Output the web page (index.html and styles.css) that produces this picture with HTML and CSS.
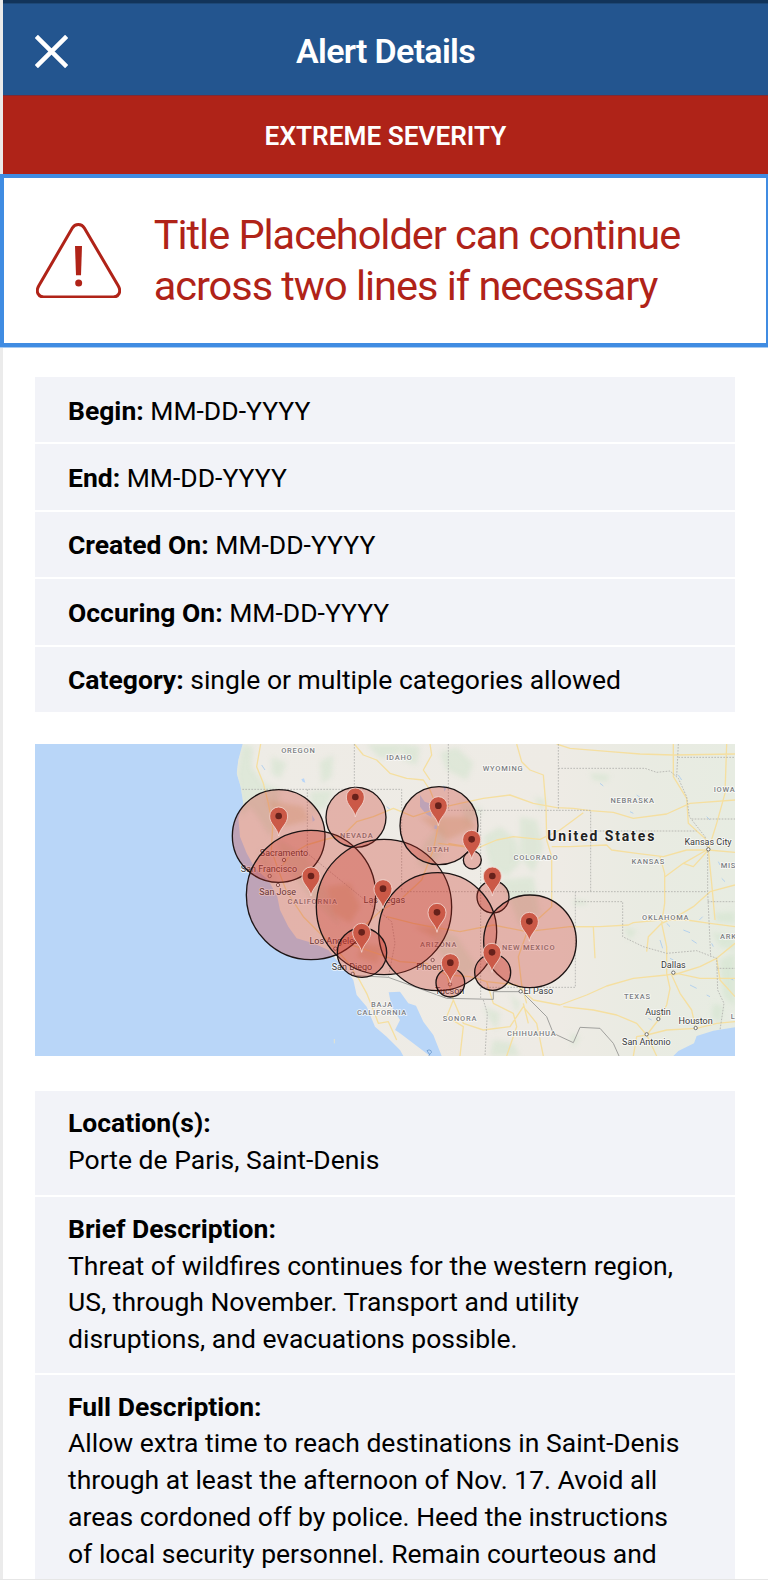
FILE: index.html
```html
<!DOCTYPE html>
<html lang="en">
<head>
<meta charset="utf-8">
<title>Alert Details</title>
<link rel="stylesheet" href="styles.css">
</head>
<body>
<div class="screen">
  <div class="status-strip"></div>
  <header class="header">
    <svg class="close" viewBox="0 0 32 32" aria-label="Close"><path d="M1.3 1.3 30.7 30.7M30.7 1.3 1.3 30.7"/></svg>
    <h1 class="header-title">Alert Details</h1>
  </header>
  <div class="severity"><span>EXTREME SEVERITY</span></div>
  <section class="title-box">
    <svg class="warning" viewBox="0 0 255 227">
      <path class="warning-outline" d="M109 15C117 1 137 1 145 15L247 189C257 207 247 222 232 222H23C8 222-2 207 8 189Z"/>
      <path class="warning-mark" d="M117 69H138L135 157H120Z"/>
      <circle class="warning-mark" cx="128" cy="180" r="10.5"/>
    </svg>
    <h2 class="title">Title Placeholder can continue<br>across two lines if necessary</h2>
  </section>
  <main class="content">
    <div class="facts">
      <p class="fact"><span><b>Begin:</b> MM-DD-YYYY</span></p>
      <p class="fact"><span><b>End:</b> MM-DD-YYYY</span></p>
      <p class="fact"><span><b>Created On:</b> MM-DD-YYYY</span></p>
      <p class="fact"><span><b>Occuring On:</b> MM-DD-YYYY</span></p>
      <p class="fact"><span><b>Category:</b> single or multiple categories allowed</span></p>
    </div>
    <svg class="map" viewBox="-495 12 2100 936" preserveAspectRatio="none">
      <defs>
        <linearGradient id="land" x1="0" x2="1"><stop offset="0" stop-color="#eeece6"/><stop offset=".65" stop-color="#eeebe5"/><stop offset=".82" stop-color="#e9ebe2"/><stop offset="1" stop-color="#e7ece2"/></linearGradient>
        <filter id="soft" x="-20%" y="-20%" width="140%" height="140%"><feGaussianBlur stdDeviation="8"/></filter>
        <clipPath id="coast"><path d="M128 12 115 60 110 100 122 140 130 190 115 235 120 290 140 340 165 385 205 420 232 470 240 510 265 560 290 595 340 610 385 630 410 660 440 690 460 720 470 765 500 800 525 860 560 890 600 930 610 948H1605V12Z"/></clipPath>
        <g id="pin"><path d="M0 60C-4 34-27 25-27 0A27 27 0 1 1 27 0C27 25 4 34 0 60Z"/><circle r="10"/></g>
      </defs>
      <rect class="water" x="-495" y="12" width="2100" height="936"/>
      <g clip-path="url(#coast)">
        <rect x="100" y="12" width="1505" height="936" fill="url(#land)"/>
        <g class="forest" filter="url(#soft)">
          <path d="M125 12 160 20 155 80 190 130 240 150 235 240 210 290 180 240 150 200 125 230 110 100Z"/>
          <path d="M215 50 260 70 240 115 215 100ZM360 65 400 45 395 110 365 130ZM330 155 400 150 380 200 335 220ZM500 12H600V40L540 55ZM235 300 320 350 390 470 420 560 340 480 250 370ZM175 330 205 350 230 440 190 390Z"/>
          <path d="M600 12 660 20 650 75 610 60ZM720 40 770 22 820 70 800 120 740 90ZM680 300 730 250 740 310 690 390 650 370ZM780 180 850 210 800 260ZM850 290 900 260 950 300 960 370 920 410 870 380ZM960 230 1010 240 1030 320 1000 400 960 350ZM900 420 1000 410 1020 520 960 560 930 480ZM690 560 770 590 830 680 790 710 720 640ZM870 600 900 620 890 700 860 680Z"/>
          <path d="M850 800 900 820 890 870 870 840ZM930 760 960 790 950 820ZM1000 170 1040 180 1025 210ZM1120 480 1160 482 1160 496 1120 495ZM1170 100 1230 105 1220 125 1180 120ZM1270 560 1310 570 1290 600ZM1540 520 1605 515V550L1550 545ZM1535 575 1605 590V630L1560 620ZM1560 660 1605 640V800L1570 770ZM1540 790 1570 800 1560 850 1535 830ZM1110 880 1140 890 1120 925ZM880 900 940 910 960 948H870Z"/>
        </g>
        <g class="desert" filter="url(#soft)"><path d="M200 180 310 200 330 240 250 260ZM380 440 450 430 480 500 450 550 400 520ZM660 230 800 230 830 260 740 300ZM490 610 550 620 530 670 470 650ZM640 560 740 560 700 590Z"/></g>
        <path class="water" d="M566 757 600 755 625 790 648 797 670 845 700 885 725 948H690L600 880 585 870 600 840 575 800ZM1420 948 1435 933 1482 910 1490 888 1540 872 1605 862V948ZM660 165 674 185 688 190 695 232 678 222 660 200ZM704 255 715 258 712 268 703 266ZM304 118 312 115 316 128 308 125ZM336 225 345 240 338 245ZM730 135 739 145 733 155Z"/>
        <g class="streams"><path d="M1200 130 1210 138M1310 165 1320 172M1435 105 1445 120M1290 215 1300 220M1520 230 1530 240M1565 415 1575 425M1450 570 1470 578M1475 600 1490 610M1380 600 1388 625M1520 765 1530 770M1470 735 1490 745M1320 780 1330 770M1345 835 1355 840M1535 610 1540 620M1410 655 1420 660M1170 280 1176 290M1400 550 1410 560M560 200 570 208M185 75 195 90M230 210 240 225M1555 365 1560 375M1590 715 1600 720M1498 540 1508 530"/></g>
        <g class="roads">
          <path d="M182 12 170 80 190 130 205 190 218 260 214 330 235 390 260 455 310 530 370 590 410 630 455 680 465 705"/>
          <path d="M230 400 270 345 320 315 370 300 430 285 470 245 520 230 580 205 640 230 715 205 780 190 850 175 930 165 1000 190 1070 203 1120 205 1170 212 1240 217 1300 235 1400 222 1470 190 1605 180"/>
          <path d="M463 12 490 45 530 60 570 100 620 115 670 120 690 150 710 200 715 255 700 330 665 420 600 480 545 510 490 560 420 620"/>
          <path d="M690 12 695 45 670 90 690 120M745 310 830 325 890 300 940 290 1020 298 1080 270 1150 218M715 310 830 325M950 12 965 65 990 90 1030 105 1038 200 1040 300 1055 350 1055 430 1055 500 1000 550 980 580 955 650 965 735 980 790"/>
          <path d="M1055 320 1110 320 1220 315 1235 330 1310 340 1390 350 1460 330 1525 330 1605 337M560 530 640 550 690 560 780 575 880 555 980 575 1110 560 1200 560 1285 555 1300 548 1380 540 1460 540 1530 550 1605 560"/>
          <path d="M440 610 530 640 600 665 680 670 740 705 810 710 860 725 950 735 1000 780 1080 795 1160 765 1220 738 1300 715 1400 705 1430 700 1500 715 1605 715"/>
          <path d="M1090 800 1180 810 1250 825 1310 850 1340 885 1400 870 1490 865 1550 850 1605 845M1340 885 1375 840 1400 795 1410 745 1400 700 1400 620 1385 550 1394 490 1394 400 1380 350M1415 705 1440 760 1475 810 1487 865M1070 12 1110 25 1230 35 1320 42 1420 45 1605 42M1420 12 1420 110 1460 175 1465 250 1520 300 1525 330 1535 430 1545 540M1580 12 1575 160 1550 250 1525 330 1480 380 1450 370 1395 410M1520 330 1450 370M1605 610 1550 655 1500 680 1420 705M1550 655 1560 720 1605 770M1530 455 1605 435M1530 455 1480 500 1430 530 1385 550 1345 590 1340 635M1110 560 1180 560 1185 655M1340 885 1310 890 1300 948M1340 885 1370 948"/>
          <path d="M470 705 500 760 520 810 535 850 565 845 590 900M740 705 760 780 790 850 850 870 930 860 970 800 1010 850 1030 948M760 780 740 830 790 860 780 948M860 725 880 790 940 820 950 860 920 948M970 790 985 850"/>
        </g>
        <g class="borders">
          <path d="M118 148H605V455H1523M463 12V148M322 148V340L575 545 585 610 565 712M745 12V211H1172V455M842 211V778M1075 12V211M1075 85H1335L1370 97 1410 93 1435 115 1460 170 1468 230 1515 290 1523 330V455L1532 650M1172 273H1490M1435 12 1430 110M1435 52H1605M1475 237H1605M1126 455V742H842M1126 485H1268V590L1330 620 1400 640 1490 632 1550 655 1553 750 1572 790 1560 870M1523 485H1605M1550 685H1605M850 780 862 820 855 948"/>
        </g>
        <path class="frontier" d="M455 706 565 712 740 775 880 778V755H965L1040 830 1060 880 1120 908 1140 862 1200 865 1240 910 1257 948"/>
      </g>
      <path d="M403 897V910" stroke="#e4e4d0" stroke-width="3"/>
      <g class="label state">
        <text x="295" y="39">OREGON</text><text x="598" y="59">IDAHO</text><text x="909" y="92">WYOMING</text>
        <text x="470" y="293">NEVADA</text><text x="715" y="336">UTAH</text><text x="1008" y="360">COLORADO</text>
        <text x="338" y="492">CALIFORNIA</text><text x="716" y="620">ARIZONA</text><text x="986" y="631">NEW MEXICO</text>
        <text x="546" y="802">BAJA</text><text x="546" y="825">CALIFORNIA</text><text x="780" y="843">SONORA</text><text x="995" y="888">CHIHUAHUA</text>
        <text x="1298" y="188">NEBRASKA</text><text x="1345" y="373">KANSAS</text><text x="1397" y="539">OKLAHOMA</text><text x="1312" y="776">TEXAS</text>
        <text class="start" x="1541" y="155">IOWA</text><text class="start" x="1562" y="385">MIS</text><text class="start" x="1560" y="597">ARK</text><text class="start" x="1592" y="838">L</text>
      </g>
      <g class="label city">
        <text x="252" y="347">Sacramento</text><text x="207" y="395">San Francisco</text><text x="233" y="465">San Jose</text><text x="402" y="613">Los Angeles</text>
        <text x="456" y="689">San Diego</text><text x="553" y="490">Las Vegas</text><text x="697" y="691">Phoenix</text><text x="749" y="761">Tucson</text><text x="1015" y="763">El Paso</text>
        <text x="1524" y="315">Kansas City</text><text x="1420" y="685">Dallas</text><text x="1374" y="825">Austin</text><text x="1487" y="851">Houston</text><text x="1339" y="914">San Antonio</text>
      </g>
      <g class="town"><circle cx="252" cy="360" r="5"/><circle cx="209" cy="408" r="5"/><circle cx="234" cy="435" r="5"/><circle cx="406" cy="626" r="5"/><circle cx="458" cy="702" r="5"/><circle cx="698" cy="660" r="5"/><circle cx="750" cy="733" r="5"/><circle cx="962" cy="754" r="5"/><circle cx="1525" cy="328" r="5"/><circle cx="1420" cy="698" r="5"/><circle cx="1375" cy="837" r="5"/><circle cx="1487" cy="864" r="5"/><circle cx="1340" cy="883" r="5"/></g>
      <path d="M681 932q6-5 12 0t-6 12M681 932l8 12-3 4" fill="none" stroke="#5b8cc4" stroke-width="2"/>
      <text class="label country" x="1205" y="304">United States</text>
      <g class="zones">
        <circle cx="236" cy="288" r="139"/><circle cx="333" cy="465" r="194"/><circle cx="468" cy="232" r="90"/><circle cx="552" cy="501" r="203"/>
        <circle cx="717" cy="257" r="117"/><circle cx="817" cy="360" r="27"/><circle cx="879" cy="471" r="48"/><circle cx="713" cy="575" r="177"/>
        <circle cx="990" cy="604" r="139"/><circle cx="878" cy="697" r="54"/><circle cx="751" cy="728" r="43"/><circle cx="486" cy="638" r="74"/>
      </g>
      <g class="pins">
        <use href="#pin" x="236" y="228"/><use href="#pin" x="466" y="171"/><use href="#pin" x="715" y="197"/><use href="#pin" x="815" y="298"/>
        <use href="#pin" x="877" y="408"/><use href="#pin" x="333" y="408"/><use href="#pin" x="549" y="446"/><use href="#pin" x="711" y="517"/>
        <use href="#pin" x="751" y="668"/><use href="#pin" x="876" y="637"/><use href="#pin" x="988" y="544"/><use href="#pin" x="485" y="577"/>
      </g>
    </svg>
    <div class="details">
      <section class="detail detail-location"><h3>Location(s):</h3><p>Porte de Paris, Saint-Denis</p></section>
      <section class="detail"><h3>Brief Description:</h3><p>Threat of wildfires continues for the western region,<br>US, through November. Transport and utility<br>disruptions, and evacuations possible.</p></section>
      <section class="detail"><h3>Full Description:</h3><p>Allow extra time to reach destinations in Saint-Denis<br>through at least the afternoon of Nov. 17. Avoid all<br>areas cordoned off by police. Heed the instructions<br>of local security personnel. Remain courteous and</p></section>
    </div>
  </main>
</div>
</body>
</html>
```
FILE: styles.css
```css
* { box-sizing: border-box; }
body { margin: 0; background: #fff; font-family: Roboto, "Liberation Sans", sans-serif; color: #000; }
h1, h2, h3, p { margin: 0; font-weight: 400; }
.screen { height: 1580px; overflow: hidden; background: linear-gradient(90deg, #ebebeb 3px, #fff 3px); border-bottom: 1px solid #e6e6e6; }
.status-strip, .header, .severity { margin-left: 3px; }
.status-strip { height: 4px; background: #12345a; border-bottom: 1px solid #1d4877; }
.header { height: 91px; display: grid; grid-template-columns: 64px 1fr 64px; align-items: center; background: #23558f; }
.close { width: 33px; height: 33px; margin: 4px 0 0 32px; }
.close path { stroke: #fff; stroke-width: 4.3; fill: none; }
.header-title { color: #fff; font-size: 34px; font-weight: 600; text-align: center; padding-top: 2px; letter-spacing: -.7px; }
.severity { height: 79px; padding-top: 1px; display: flex; align-items: center; justify-content: center; background: #af2318; border-top: 1px solid #7e2a35; color: #fff; font-size: 26.2px; font-weight: 600; }
.title-box { height: 173px; display: flex; align-items: flex-start; gap: 33px; padding: 30.6px 0 0 31.7px; background: #fff; border: 4px solid #408ce2; border-right-width: 2px; box-shadow: 0 1px #a5caf2; position: relative; }
.warning { width: 85px; height: 75.7px; margin-top: 14px; flex: none; }
.warning-outline { fill: none; stroke: #b02318; stroke-width: 9; }
.warning-mark { fill: #b02318; }
.title { color: #b02318; font-size: 41.5px; line-height: 51px; letter-spacing: -1.02px; white-space: nowrap; }
.content { padding: 30px 33px 0 35px; display: flex; flex-direction: column; }
.facts, .details { display: grid; gap: 2px; }
.fact, .detail { background: #f2f3f8; font-size: 26.5px; line-height: 36.75px; padding-left: 33px; white-space: nowrap; }
.fact { height: 65.4px; display: flex; align-items: center; padding-top: 2.6px; }
b, .detail h3 { font-weight: 700; font-size: inherit; }
.detail { padding-top: 13.6px; padding-bottom: 15px; }
.detail-location { padding-bottom: 17px; }
.map { display: block; width: 700px; height: 312px; margin: 32px 0 35.3px; }
.water { fill: #b9d6f8; }
.forest { fill: #cfe3cb; opacity: .5; }
.desert { fill: #dccba8; opacity: .55; }
.streams { fill: none; stroke: #aacbee; stroke-width: 2.5; }
.roads { fill: none; stroke: #f5dfa0; stroke-width: 4; stroke-linejoin: round; }
.borders { fill: none; stroke: #adadaa; stroke-width: 2.4; stroke-dasharray: 5 4; }
.frontier { fill: none; stroke: #a0a09d; stroke-width: 3; }
.label { text-anchor: middle; paint-order: stroke; stroke: #fff; stroke-opacity: .75; stroke-width: 5px; stroke-linejoin: round; }
.start { text-anchor: start; }
.state { font-size: 22.5px; font-weight: 500; letter-spacing: 2.3px; fill: #7c7e82; }
.city { font-size: 27px; fill: #3a3a3a; }
.country { font-size: 42px; font-weight: 700; letter-spacing: 5.6px; fill: #222; }
.town { fill: #fff; stroke: #555; stroke-width: 2.5; }
.zones { fill: rgba(201, 48, 34, .3); stroke: #1c1414; stroke-width: 4; }
.pins { fill: #cb5947; stroke: #f3d9d3; stroke-width: 2.5; }
#pin circle { fill: #67211b; stroke: none; }
```
